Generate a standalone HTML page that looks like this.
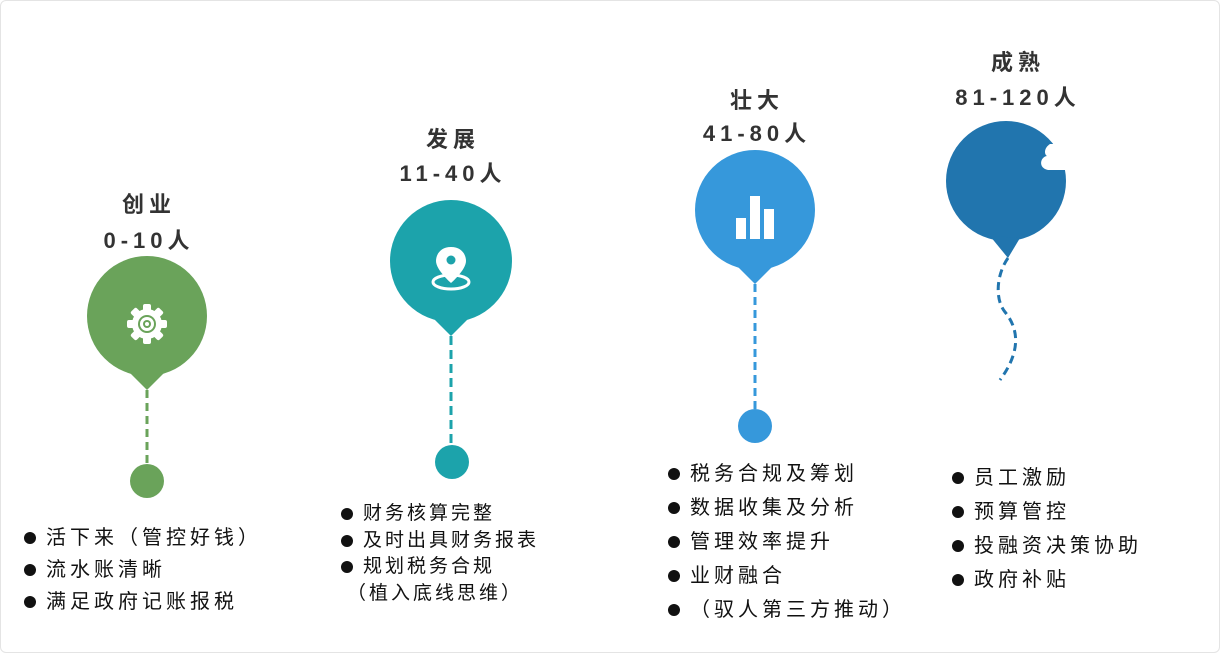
<!DOCTYPE html>
<html><head><meta charset="utf-8"><style>
body{margin:0;width:1220px;height:653px;background:#fff;overflow:hidden;position:relative;font-family:"Liberation Sans","Noto Sans CJK SC",sans-serif;}
.frame{position:absolute;left:0;top:0;width:1218px;height:651px;border:1px solid #e4e4e4;border-radius:6px;}
.t{position:absolute;text-align:center;font-weight:bold;color:#333;font-size:22px;line-height:26px;letter-spacing:5px;white-space:nowrap;transform:translateX(-50%)}
.l{position:absolute;color:#111;white-space:nowrap;font-size:20px;letter-spacing:4px}
.l div{position:relative;padding-left:22px}
.l div.b:before{content:"";position:absolute;left:0;top:50%;width:12px;height:12px;margin-top:-6px;border-radius:50%;background:#111}
</style></head><body>
<div class="frame"></div>
<svg width="1220" height="653" style="position:absolute;left:0;top:0">
<g fill="#6aa35a"><circle cx="147" cy="316" r="60"/><path d="M127 370 L147 390 L167 370Z"/><circle cx="147" cy="481" r="17"/></g>
<line x1="147" y1="390" x2="147" y2="466" stroke="#6aa35a" stroke-width="3" stroke-dasharray="8 5"/>
<g fill="#1ca3ab"><circle cx="451" cy="261" r="61"/><path d="M431 316 L451 336 L471 316Z"/><circle cx="452" cy="462" r="17"/></g>
<line x1="451" y1="336" x2="451" y2="448" stroke="#1ca3ab" stroke-width="3" stroke-dasharray="9 5"/>
<g fill="#3698db"><circle cx="755" cy="210" r="60"/><path d="M735 264 L755 284 L775 264Z"/><circle cx="755" cy="426" r="17"/></g>
<line x1="755" y1="284" x2="755" y2="412" stroke="#3698db" stroke-width="3" stroke-dasharray="8 5"/>
<g fill="#2175ae"><circle cx="1006" cy="181" r="60"/><path d="M990 236 L1008 258 L1020 238Z"/></g>
<path d="M1050 144 C1044 148,1044 154,1047 156 C1040 157,1038 168,1048 170 L1075 170 L1075 144Z" fill="#fff"/>
<path d="M1008 258 C996 275,995 300,1005 312 C1018 328,1022 350,1000 380" fill="none" stroke="#2175ae" stroke-width="3" stroke-dasharray="8 5"/>
<g transform="translate(147,324)" fill="#fff">
<circle r="15"/>
<g><rect x="-4" y="-20" width="8" height="40" rx="2"/><rect x="-4" y="-20" width="8" height="40" rx="2" transform="rotate(45)"/><rect x="-4" y="-20" width="8" height="40" rx="2" transform="rotate(90)"/><rect x="-4" y="-20" width="8" height="40" rx="2" transform="rotate(135)"/></g>
<circle r="9" fill="#6aa35a"/><circle r="7" fill="#fff"/><circle r="4" fill="#6aa35a"/><circle r="2" fill="#fff"/>
</g>
<ellipse cx="451" cy="282" rx="18" ry="7" fill="none" stroke="#fff" stroke-width="3"/>
<path d="M451 247 C440 247 436 255 436 261 C436 270 451 283 451 283 C451 283 466 270 466 261 C466 255 462 247 451 247Z" fill="#fff"/>
<circle cx="451" cy="260" r="4.5" fill="#1ca3ab"/>
<g fill="#fff"><rect x="736" y="218" width="10" height="21"/><rect x="750" y="196" width="10" height="43"/><rect x="764" y="209" width="10" height="30"/></g>
</svg>
<div class="t" style="left:149px;top:192px">创业</div>
<div class="t" style="left:149px;top:228px">0-10人</div>
<div class="t" style="left:453px;top:127px">发展</div>
<div class="t" style="left:453px;top:161px">11-40人</div>
<div class="t" style="left:757px;top:88px">壮大</div>
<div class="t" style="left:757px;top:121px">41-80人</div>
<div class="t" style="left:1018px;top:50px">成熟</div>
<div class="t" style="left:1018px;top:85px">81-120人</div>
<div class="l" style="left:24px;top:522px;line-height:32px"><div class="b">活下来（管控好钱）</div><div class="b">流水账清晰</div><div class="b">满足政府记账报税</div></div>
<div class="l" style="left:341px;top:501px;line-height:26.5px;font-size:19px;letter-spacing:3px"><div class="b">财务核算完整</div><div class="b">及时出具财务报表</div><div class="b">规划税务合规</div><div style="padding-left:6px">（植入底线思维）</div></div>
<div class="l" style="left:668px;top:457px;line-height:34px"><div class="b">税务合规及筹划</div><div class="b">数据收集及分析</div><div class="b">管理效率提升</div><div class="b">业财融合</div><div class="b">（驭人第三方推动）</div></div>
<div class="l" style="left:952px;top:461px;line-height:34px"><div class="b">员工激励</div><div class="b">预算管控</div><div class="b">投融资决策协助</div><div class="b">政府补贴</div></div>
</body></html>
